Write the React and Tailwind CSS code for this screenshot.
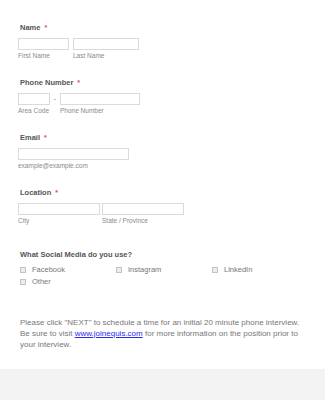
export default function App() {
  const label = "text-[7.5px] font-bold text-[#555] leading-[8px]";
  const sub = "text-[6.5px] text-[#8a8a8a] leading-[7px] mt-[2px]";
  const input = "h-[12px] border border-[#dadada] bg-white";
  const Label = ({ children, star = true }) => (
    <div className="pl-[2px] h-[8px] flex items-center">
      <span className={label}>{children}</span>
      {star && <span className="text-[7px] leading-[8px] text-[#e04b4b] ml-[4px] font-bold">*</span>}
    </div>
  );
  const Check = ({ children }) => (
    <div className="w-[96px] h-[8px] flex items-center pl-[2px]">
      <div className="w-[6px] h-[6px] border border-[#c4c4c4] bg-[#ececec]" />
      <span className="ml-[6px] text-[7.5px] text-[#777] leading-[8px]">{children}</span>
    </div>
  );
  return (
    <div
      className="w-[325px] h-[400px] bg-white flex flex-col"
      style={{ fontFamily: '"Liberation Sans", Arial, sans-serif' }}
    >
      <div className="flex-1 flex flex-col pl-[18px] pt-[24px]">
        <Label>Name</Label>
        <div className="mt-[6px] flex gap-[4px]">
          <div className="flex flex-col">
            <div className={input + " w-[51px]"} />
            <span className={sub}>First Name</span>
          </div>
          <div className="flex flex-col">
            <div className={input + " w-[66px]"} />
            <span className={sub}>Last Name</span>
          </div>
        </div>

        <div className="mt-[20px]">
          <Label>Phone Number</Label>
        </div>
        <div className="mt-[6px] flex">
          <div className="flex flex-col">
            <div className={input + " w-[32px]"} />
            <span className={sub}>Area Code</span>
          </div>
          <div className="w-[10px] h-[12px] flex items-center justify-center text-[7px] text-[#888]">-</div>
          <div className="flex flex-col">
            <div className={input + " w-[80px]"} />
            <span className={sub}>Phone Number</span>
          </div>
        </div>

        <div className="mt-[20px]">
          <Label>Email</Label>
        </div>
        <div className="mt-[6px] flex flex-col">
          <div className={input + " w-[111px]"} />
          <span className={sub}>example@example.com</span>
        </div>

        <div className="mt-[20px]">
          <Label>Location</Label>
        </div>
        <div className="mt-[6px] flex gap-[2px]">
          <div className="flex flex-col">
            <div className={input + " w-[82px]"} />
            <span className={sub}>City</span>
          </div>
          <div className="flex flex-col">
            <div className={input + " w-[82px]"} />
            <span className={sub}>State / Province</span>
          </div>
        </div>

        <div className="mt-[27px]">
          <Label star={false}>What Social Media do you use?</Label>
        </div>
        <div className="mt-[7px] flex flex-col gap-[4px]">
          <div className="flex">
            <Check>Facebook</Check>
            <Check>Instagram</Check>
            <Check>LinkedIn</Check>
          </div>
          <div className="flex">
            <Check>Other</Check>
          </div>
        </div>

        <p className="mt-[31px] pl-[2px] pr-[18px] text-[8px] leading-[11px] text-[#777]">
          Please click "NEXT" to schedule a time for an initial 20 minute phone interview. Be sure to visit{" "}
          <a className="text-[#2b2bf0] underline" href="#">www.joinequis.com</a> for more information on the position prior to your interview.
        </p>
      </div>
      <div className="h-[31px] bg-[#f3f3f3]" />
    </div>
  );
}
